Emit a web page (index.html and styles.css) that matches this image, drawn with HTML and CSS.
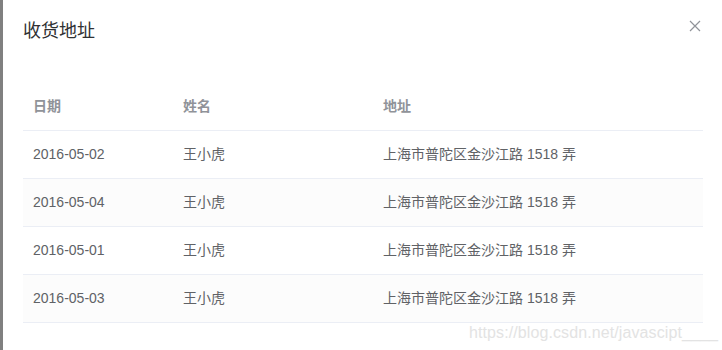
FILE: index.html
```html
<!DOCTYPE html>
<html lang="zh">
<head>
<meta charset="utf-8">
<title>收货地址</title>
<link rel="stylesheet" href="styles.css">
</head>
<body>
<div class="overlay">
  <div class="dialog">
    <div class="dialog-header">
      <span class="dialog-title">收货地址</span>
      <button class="close-btn" aria-label="Close">
        <svg width="12" height="12" viewBox="0 0 12 12"><path d="M1 1L11 11M11 1L1 11" stroke="#909399" stroke-width="1.2" fill="none"/></svg>
      </button>
    </div>
    <div class="dialog-body">
      <table class="table">
        <colgroup><col class="c1"><col class="c2"><col></colgroup>
        <thead>
          <tr><th><div class="cell">日期</div></th><th><div class="cell">姓名</div></th><th><div class="cell">地址</div></th></tr>
        </thead>
        <tbody>
          <tr><td><div class="cell">2016-05-02</div></td><td><div class="cell">王小虎</div></td><td><div class="cell">上海市普陀区金沙江路 1518 弄</div></td></tr>
          <tr class="striped"><td><div class="cell">2016-05-04</div></td><td><div class="cell">王小虎</div></td><td><div class="cell">上海市普陀区金沙江路 1518 弄</div></td></tr>
          <tr><td><div class="cell">2016-05-01</div></td><td><div class="cell">王小虎</div></td><td><div class="cell">上海市普陀区金沙江路 1518 弄</div></td></tr>
          <tr class="striped"><td><div class="cell">2016-05-03</div></td><td><div class="cell">王小虎</div></td><td><div class="cell">上海市普陀区金沙江路 1518 弄</div></td></tr>
        </tbody>
      </table>
    </div>
  </div>
  <div class="watermark">https://blog.csdn.net/javascipt____</div>
</div>
</body>
</html>
```
FILE: styles.css
```css
html, body {
  margin: 0;
  padding: 0;
  height: 100%;
  overflow: hidden;
}
body {
  font-family: "Liberation Sans", "Noto Sans CJK SC", Arial, sans-serif;
  background: #808080;
}
.overlay {
  position: relative;
  height: 100%;
  padding-left: 3px;
}
.dialog {
  background: #fff;
  width: 720px;
  height: 100%;
  box-sizing: border-box;
}
.dialog-header {
  position: relative;
  padding: 19px 20px 10px;
}
.dialog-title {
  display: block;
  font-size: 18px;
  line-height: 24px;
  color: #303133;
}
.close-btn {
  position: absolute;
  top: 20px;
  right: 22px;
  padding: 0;
  border: 0;
  background: transparent;
  width: 12px;
  height: 12px;
  display: flex;
}
.dialog-body {
  padding: 30px 20px 30px;
}
.table {
  width: 680px;
  border-collapse: collapse;
  table-layout: fixed;
  font-size: 14px;
}
.c1 { width: 150px; }
.c2 { width: 200px; }
th, td {
  padding: 12px 0;
  border-bottom: 1px solid #EBEEF5;
  text-align: left;
  height: 23px;
}
th {
  color: #909399;
  font-weight: bold;
}
td {
  color: #606266;
}
.cell {
  padding: 0 10px;
  line-height: 23px;
  white-space: nowrap;
}
.striped td {
  background: #FCFCFC;
}
.watermark {
  position: absolute;
  left: 469px;
  top: 323px;
  font-size: 16px;
  line-height: 20px;
  color: #e3e3e3;
  letter-spacing: 0.1px;
}
```
